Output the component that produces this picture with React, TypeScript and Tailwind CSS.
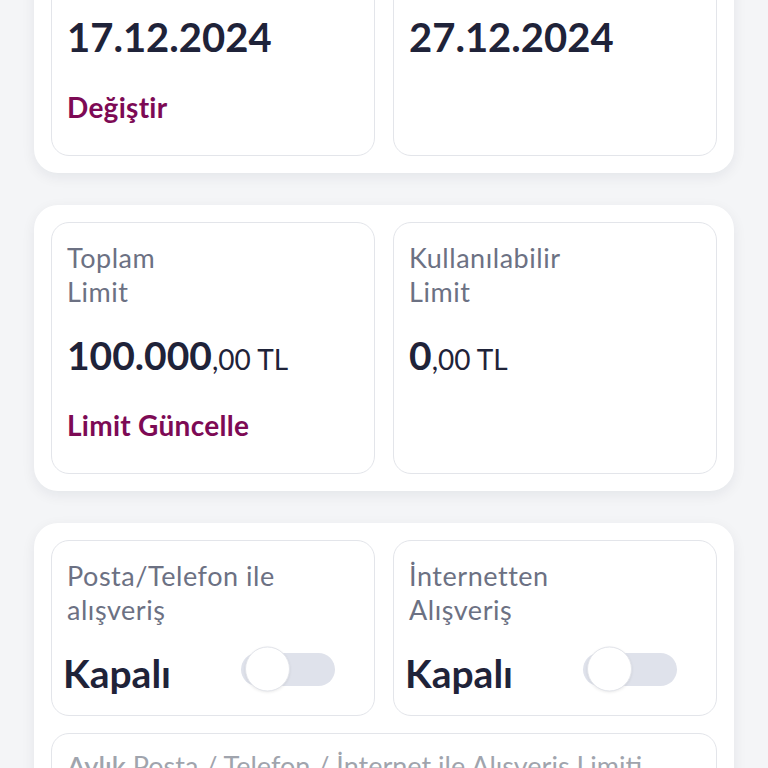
import React from "react";

const label = "text-[27px] leading-[34px] tracking-[0.02em] text-[#6c7183]";
const inner = "rounded-[18px] border border-[#e3e5ea] bg-white px-[15px] pt-[18px] pb-[32px] flex flex-col";
const outer = "rounded-[24px] bg-white p-[17px] shadow-[0_4px_14px_rgba(20,25,50,0.07)]";
const link = "text-[28px] leading-[31px] tracking-[0.01em] font-bold text-[#7d0a55]";

function Toggle() {
  return (
    <div className="relative mb-[8px] w-[94px] h-[33px] rounded-full bg-[#dfe2eb] shrink-0">
      <div className="absolute left-[4px] top-1/2 -translate-y-1/2 w-[45px] h-[45px] rounded-full bg-white border border-[#e2e4ea] shadow-[0_1px_3px_rgba(0,0,0,0.08)]" />
    </div>
  );
}

export default function App() {
  return (
    <div className="h-[768px] overflow-hidden bg-[#f4f5f7] font-['Lato',sans-serif]">
      <div className="px-[34px] -mt-[115px] flex flex-col gap-[32px]">
        {/* Dates */}
        <div className={outer + " grid grid-cols-2 gap-[18px]"}>
          <div className={inner}>
            <div className={label}>Hesap Kesim<br />Tarihi</div>
            <div className="mt-[23px] text-[40px] leading-[50px] font-bold text-[#1f2339]">17.12.2024</div>
            <div className={link + " mt-[30px]"}>Değiştir</div>
          </div>
          <div className={inner}>
            <div className={label}>Son Ödeme<br />Tarihi</div>
            <div className="mt-[23px] text-[40px] leading-[50px] font-bold text-[#1f2339]">27.12.2024</div>
          </div>
        </div>

        {/* Limits */}
        <div className={outer + " grid grid-cols-2 gap-[18px]"}>
          <div className={inner}>
            <div className={label}>Toplam<br />Limit</div>
            <div className="mt-[23px] leading-[46px] text-[#1f2339]">
              <span className="text-[39px] font-bold">100.000</span>
              <span className="text-[28px]">,00 TL</span>
            </div>
            <div className={link + " mt-[23px]"}>Limit Güncelle</div>
          </div>
          <div className={inner}>
            <div className={label}>Kullanılabilir<br />Limit</div>
            <div className="mt-[23px] leading-[46px] text-[#1f2339]">
              <span className="text-[39px] font-bold">0</span>
              <span className="text-[28px]">,00 TL</span>
            </div>
          </div>
        </div>

        {/* Shopping */}
        <div className={outer + " grid grid-cols-2 gap-x-[18px] gap-y-[17px]"}>
          <div className="rounded-[18px] border border-[#e3e5ea] bg-white px-[15px] pt-[18px] pb-[20px] flex flex-col">
            <div className={label}>Posta/Telefon ile<br />alışveriş</div>
            <div className="mt-[24px] -ml-[4px] flex items-center">
              <span className="w-[178px] text-[39px] leading-[44px] font-bold text-[#1f2339]">Kapalı</span>
              <Toggle />
            </div>
          </div>
          <div className="rounded-[18px] border border-[#e3e5ea] bg-white px-[15px] pt-[18px] pb-[20px] flex flex-col">
            <div className={label}>İnternetten<br />Alışveriş</div>
            <div className="mt-[24px] -ml-[4px] flex items-center">
              <span className="w-[178px] text-[39px] leading-[44px] font-bold text-[#1f2339]">Kapalı</span>
              <Toggle />
            </div>
          </div>
          <div className="col-span-2 rounded-[18px] border border-[#e3e5ea] bg-white px-[15px] pt-[15px] pb-[18px]">
            <div className="text-[27px] leading-[34px] text-[#a0a4ad]">
              <span className="font-semibold">Aylık</span> Posta / Telefon / İnternet ile Alışveriş Limiti
            </div>
            <div className="mt-[10px] text-[30px] leading-[40px] font-bold text-[#1f2339]">0,00 TL</div>
          </div>
        </div>
      </div>
    </div>
  );
}
